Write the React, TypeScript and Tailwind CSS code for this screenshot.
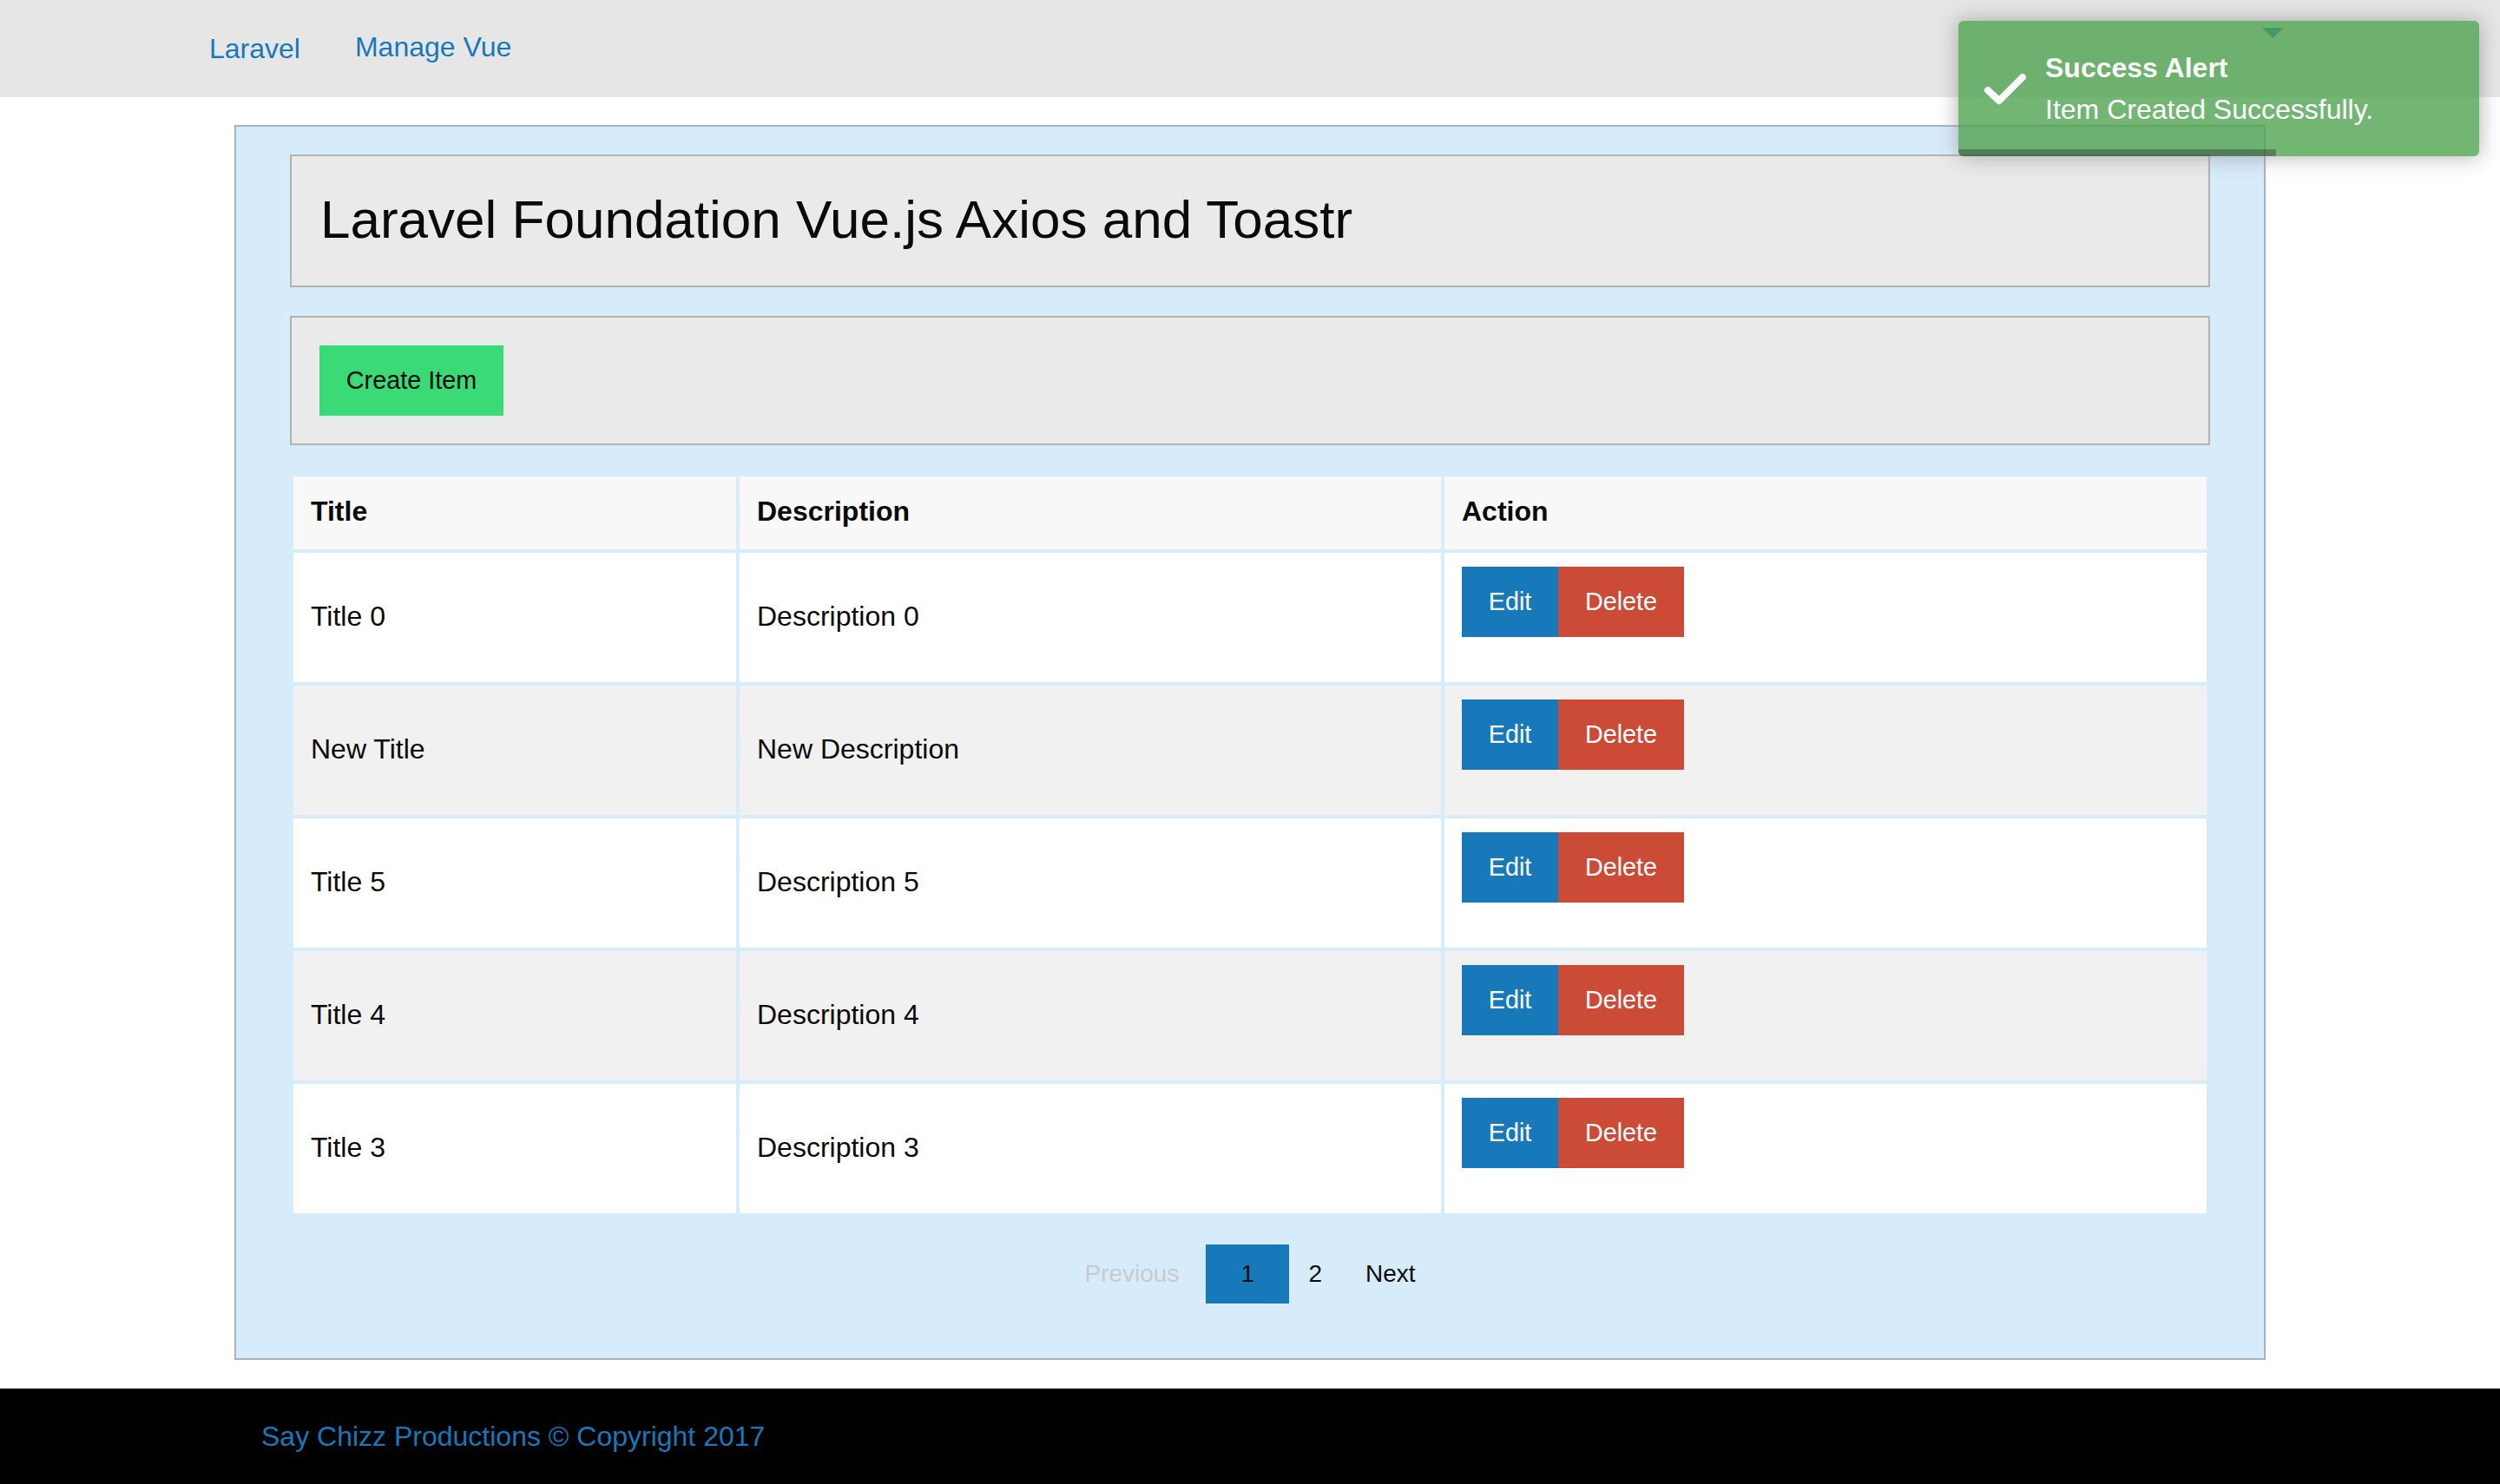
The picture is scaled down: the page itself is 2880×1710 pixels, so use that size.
import React from 'react';

interface Item {
  title: string;
  description: string;
}

const items: Item[] = [
  { title: 'Title 0', description: 'Description 0' },
  { title: 'New Title', description: 'New Description' },
  { title: 'Title 5', description: 'Description 5' },
  { title: 'Title 4', description: 'Description 4' },
  { title: 'Title 3', description: 'Description 3' },
];

const Toast: React.FC = () => (
  <div className="absolute right-[24px] top-[24px] w-[600px]">
    <div className="relative overflow-hidden rounded-[6px] bg-[#51a351] py-[30px] pl-[100px] pr-[30px] text-[32px] leading-[48px] text-white opacity-80 shadow-[0_0_24px_#999]">
      <svg className="absolute left-[28px] top-[58px]" width="52" height="40" viewBox="0 0 52 40">
        <polyline points="6,22 19,34 46,7" fill="none" stroke="white" strokeWidth="8" strokeLinecap="round" strokeLinejoin="round" />
      </svg>
      <div className="font-bold">Success Alert</div>
      <div>Item Created Successfully.</div>
      <div className="absolute bottom-0 left-0 h-[8px] w-[366px] bg-black/40" />
    </div>
    {/* little marker on top of the toast */}
    <div className="absolute left-[350px] top-[8px] h-0 w-0 border-x-[12px] border-t-[12px] border-x-transparent border-t-[#3f9b60]" />
  </div>
);

const App: React.FC = () => (
  <div className="relative min-h-screen bg-white font-['Liberation_Sans',Arial,sans-serif] text-[#0a0a0a]">
    <nav className="h-[112px] bg-[#e6e6e6]">
      <div className="mx-auto flex h-full max-w-[2400px] items-center gap-[63px] pb-[5px] pl-px text-[32px] leading-none text-[#1779ba]">
        <a href="#" className="pt-[4px]">Laravel</a>
        <a href="#">Manage Vue</a>
      </div>
    </nav>

    <main className="mx-auto mt-[32px] w-[2340px] border-2 border-[#a4b4be] bg-[#d7ecfa] px-[62px] pb-[63px] pt-[32px]">
      <div className="border-2 border-[#b2b2b2] bg-[#eaeaea] px-[33px] pb-[39px] pt-[36px]">
        <h1 className="text-[62px] font-normal leading-[74px]">Laravel Foundation Vue.js Axios and Toastr</h1>
      </div>

      <div className="mt-[33px] border-2 border-[#b2b2b2] bg-[#eaeaea] p-[32px]">
        <button className="flex h-[81px] w-[212px] items-center justify-center bg-[#3adb76] text-[28.8px] leading-none text-[#0a0a0a]">
          Create Item
        </button>
      </div>

      <table className="mt-[32px] w-full border-separate border-spacing-1 text-[32px] leading-[48px]">
        <thead>
          <tr className="bg-[#f8f8f8]">
            <th className="w-[510px] px-[20px] pb-[20px] pt-[16px] text-left font-bold">Title</th>
            <th className="w-[808px] px-[20px] pb-[20px] pt-[16px] text-left font-bold">Description</th>
            <th className="px-[20px] pb-[20px] pt-[16px] text-left font-bold">Action</th>
          </tr>
        </thead>
        <tbody>
          {items.map((item, i) => (
            <tr key={i} className={i % 2 === 0 ? 'bg-white' : 'bg-[#f1f1f1]'}>
              <td className="px-[20px] pb-[20px] pt-[16px] align-middle">{item.title}</td>
              <td className="px-[20px] pb-[20px] pt-[16px] align-middle">{item.description}</td>
              <td className="px-[20px] pb-[20px] pt-[16px] align-top">
                <div className="mb-[32px] flex">
                  <button className="flex h-[81px] w-[111px] items-center justify-center bg-[#1779ba] text-[28.8px] leading-none text-white">Edit</button>
                  <button className="flex h-[81px] w-[145px] items-center justify-center bg-[#cc4b37] text-[28.8px] leading-none text-white">Delete</button>
                </div>
              </td>
            </tr>
          ))}
        </tbody>
      </table>

      <div className="mt-[32px] flex items-center justify-center text-[28px] leading-none">
        <span className="mr-[31px] text-[#cacaca]">Previous</span>
        <span className="flex h-[68px] w-[96px] items-center justify-center bg-[#1779ba]">1</span>
        <a href="#" className="ml-[22px]">2</a>
        <a href="#" className="ml-[50px]">Next</a>
      </div>
    </main>

    <footer className="mt-[33px] h-[110px] bg-black">
      <div className="mx-auto flex h-full max-w-[2400px] items-center px-[61px] text-[32px] text-[#1779ba]">
        Say Chizz Productions © Copyright 2017
      </div>
    </footer>

    <Toast />
  </div>
);

export default App;
